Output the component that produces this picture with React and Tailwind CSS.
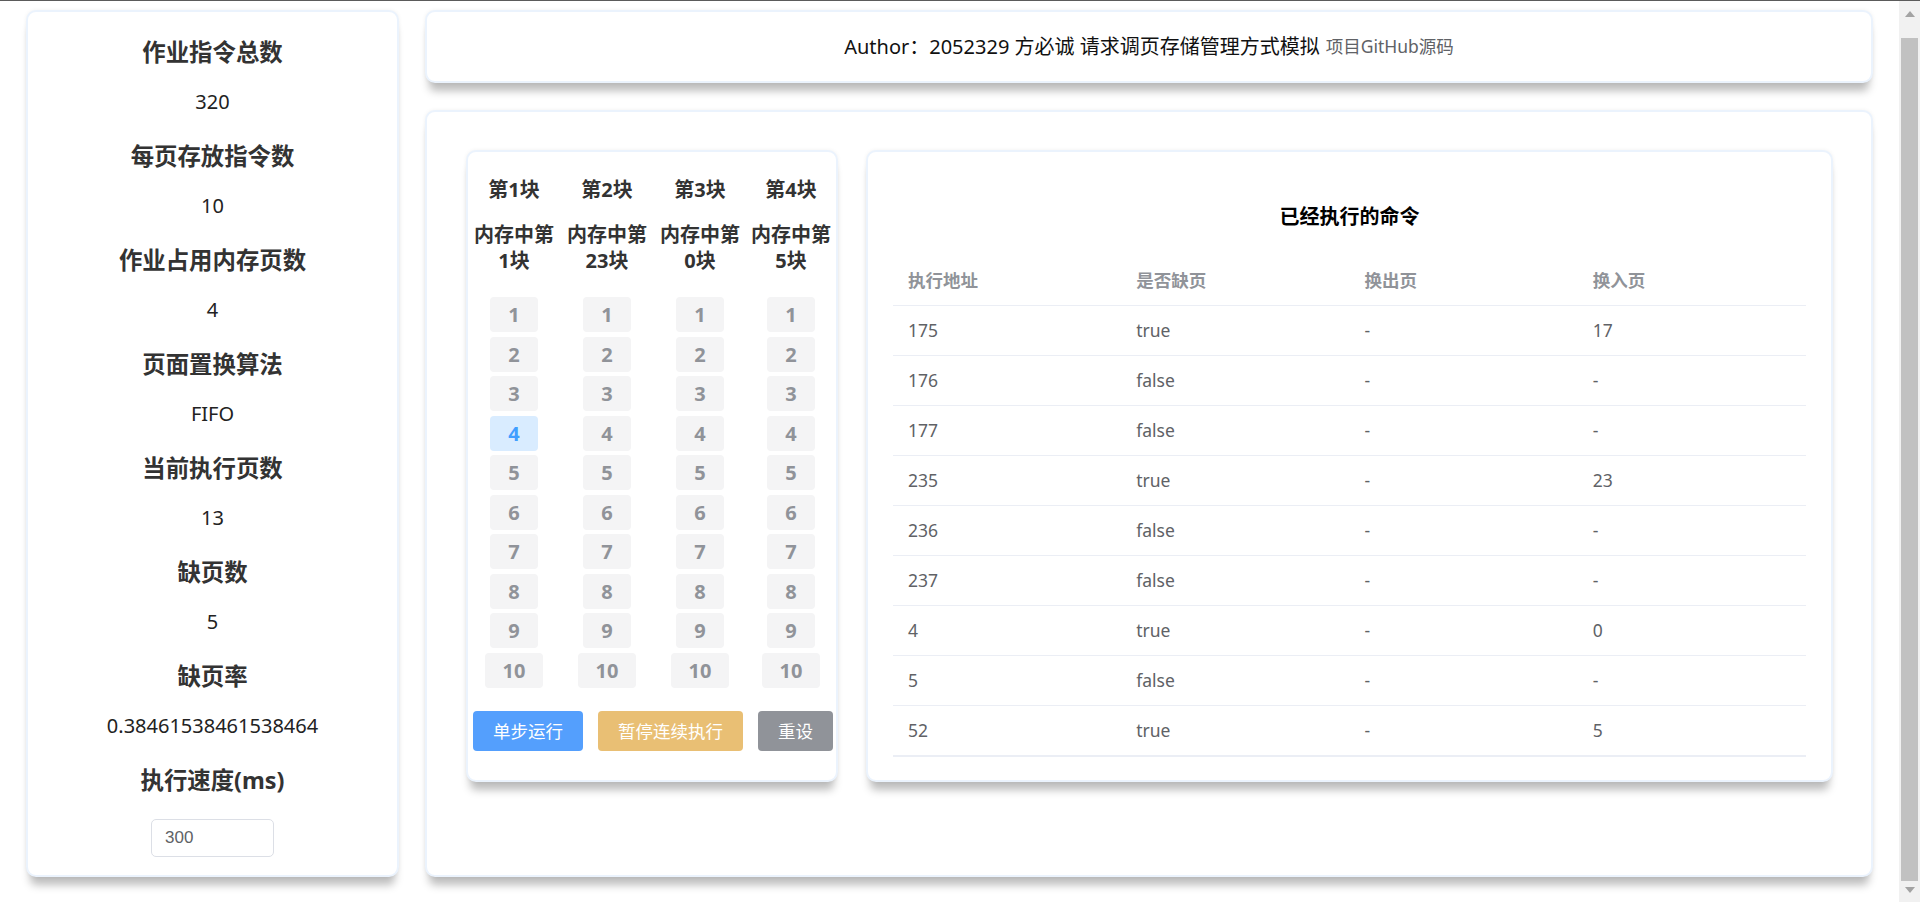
import { useState } from "react";

const STATS = [
  { title: "作业指令总数", value: "320" },
  { title: "每页存放指令数", value: "10" },
  { title: "作业占用内存页数", value: "4" },
  { title: "页面置换算法", value: "FIFO" },
  { title: "当前执行页数", value: "13" },
  { title: "缺页数", value: "5" },
  { title: "缺页率", value: "0.38461538461538464" },
];

// which memory page each block holds, and the active slot (block, line)
const BLOCKS = [
  { name: "第1块", page: 1 },
  { name: "第2块", page: 23 },
  { name: "第3块", page: 0 },
  { name: "第4块", page: 5 },
];
const ACTIVE = { block: 0, line: 4 };

const ROWS = [
  ["175", "true", "-", "17"],
  ["176", "false", "-", "-"],
  ["177", "false", "-", "-"],
  ["235", "true", "-", "23"],
  ["236", "false", "-", "-"],
  ["237", "false", "-", "-"],
  ["4", "true", "-", "0"],
  ["5", "false", "-", "-"],
  ["52", "true", "-", "5"],
];

const card =
  "bg-white border-2 border-[#ebf3fd] rounded-[10px] shadow-[0_12px_8px_-4px_rgba(0,0,0,0.26),0_0_4px_rgba(0,0,0,0.06)]";

function StatsCard() {
  const [speed, setSpeed] = useState("300");
  return (
    <div className={`${card} w-[373px] h-[867px] flex flex-col items-center pt-[25px] shrink-0`}>
      {STATS.map((s, i) => (
        <div key={s.title} className={`flex flex-col items-center ${i > 0 ? "mt-[26px]" : ""}`}>
          <div className="h-[30px] leading-[30px] text-[23.4px] font-bold text-[#333]">{s.title}</div>
          <div className="mt-[22px] h-[26px] leading-[26px] text-[20px] text-[#222]">{s.value}</div>
        </div>
      ))}
      <div className="mt-[26px] h-[30px] leading-[30px] text-[23.4px] font-bold text-[#333]">
        执行速度(ms)
      </div>
      <input
        value={speed}
        onChange={(e) => setSpeed(e.target.value)}
        className="mt-[24px] w-[123px] h-[38px] border border-[#dcdfe6] rounded-[5px] px-[13px] text-[17px] text-[#606266] font-['Liberation_Sans',Arial,sans-serif] outline-none"
      />
    </div>
  );
}

function MemoryPanel() {
  const widths = ["w-[92px]", "w-[94px]", "w-[92px]", "w-[90px]"];
  return (
    <div className={`${card} w-[372px] h-[632px] shrink-0 flex flex-col`}>
      <div className="flex pt-[24px]">
        {BLOCKS.map((b, bi) => (
          <div key={b.name} className={`${widths[bi]} flex flex-col items-center`}>
            <div className="h-[27px] leading-[27px] text-[20px] font-bold text-[#333]">{b.name}</div>
            <div className="mt-[19px] w-[80px] text-center leading-[26px] text-[20px] font-bold text-[#333]">
              内存中第{b.page}块
            </div>
            <div className="mt-[23px] flex flex-col items-center gap-[4.56px]">
              {Array.from({ length: 10 }, (_, k) => k + 1).map((n) => {
                const on = ACTIVE.block === bi && ACTIVE.line === n;
                return (
                  <div
                    key={n}
                    className={`h-[35px] leading-[35px] px-[18px] rounded-[4px] text-[20px] font-bold ${
                      on ? "bg-[#d9ecff] text-[#409eff]" : "bg-[#f4f4f5] text-[#909399]"
                    }`}
                  >
                    {n}
                  </div>
                );
              })}
            </div>
          </div>
        ))}
      </div>
      <div className="flex gap-[15px] pl-[5px] mt-[23px]">
        <button className="h-[40px] px-[20px] rounded-[4px] bg-[#549ffd] text-white text-[17.5px]">单步运行</button>
        <button className="h-[40px] px-[20px] rounded-[4px] bg-[#e9bf74] text-white text-[17.5px]">暂停连续执行</button>
        <button className="h-[40px] px-[20px] rounded-[4px] bg-[#909399] text-white text-[17.5px]">重设</button>
      </div>
    </div>
  );
}

function HistoryPanel() {
  const heads = ["执行地址", "是否缺页", "换出页", "换入页"];
  return (
    <div className={`${card} flex-1 h-[632px] pt-[51px] px-[25px]`}>
      <div className="text-center h-[27px] leading-[27px] text-[20px] font-bold text-black">已经执行的命令</div>
      <div className="mt-[25px] border-b border-[#ebeef5]">
        <table className="w-full table-fixed border-collapse">
          <thead>
            <tr>
              {heads.map((h) => (
                <th
                  key={h}
                  className="h-[50px] text-left pl-[15px] text-[17.5px] font-bold text-[#909399] border-b border-[#ebeef5]"
                >
                  {h}
                </th>
              ))}
            </tr>
          </thead>
          <tbody>
            {ROWS.map((r, i) => (
              <tr key={i}>
                {r.map((c, j) => (
                  <td key={j} className="h-[50px] pl-[15px] text-[17.5px] text-[#606266] border-b border-[#ebeef5]">
                    {c}
                  </td>
                ))}
              </tr>
            ))}
          </tbody>
        </table>
      </div>
    </div>
  );
}

// the window's own scrollbar, as seen in the screenshot
function FakeScrollbar() {
  return (
    <div className="fixed top-[1px] right-0 bottom-0 w-[21px] bg-[#f1f1f1] flex flex-col items-center">
      <svg width="10" height="6" viewBox="0 0 10 6" className="mt-[10px]">
        <path d="M0 6 L5 0 L10 6 Z" fill="#a3a3a3" />
      </svg>
      <div className="mt-[21px] w-[17px] flex-1 bg-[#c1c1c1]" />
      <svg width="10" height="6" viewBox="0 0 10 6" className="mt-[6px] mb-[9px]">
        <path d="M0 0 L10 0 L5 6 Z" fill="#a3a3a3" />
      </svg>
    </div>
  );
}

export default function App() {
  return (
    <div className="min-h-[902px] bg-white font-['Noto_Sans','Noto_Sans_CJK_SC',sans-serif]">
      <div className="h-[1px] bg-[#5b5b5b]" />
      <div className="flex items-start pt-[9px] pl-[26px] gap-[26px]">
        <StatsCard />
        <div className="w-[1448px] shrink-0 flex flex-col gap-[27px]">
          <div className={`${card} h-[73px] flex items-center justify-center`}>
            <span className="text-[20px] text-[#111]">Author：2052329 方必诚 请求调页存储管理方式模拟</span>
            <a href="#" className="ml-[6px] text-[17.5px] text-[#606266]">项目GitHub源码</a>
          </div>
          <div className={`${card} h-[767px] flex items-start gap-[28px] pt-[38px] pl-[39px] pr-[38px]`}>
            <MemoryPanel />
            <HistoryPanel />
          </div>
        </div>
      </div>
      <FakeScrollbar />
    </div>
  );
}
